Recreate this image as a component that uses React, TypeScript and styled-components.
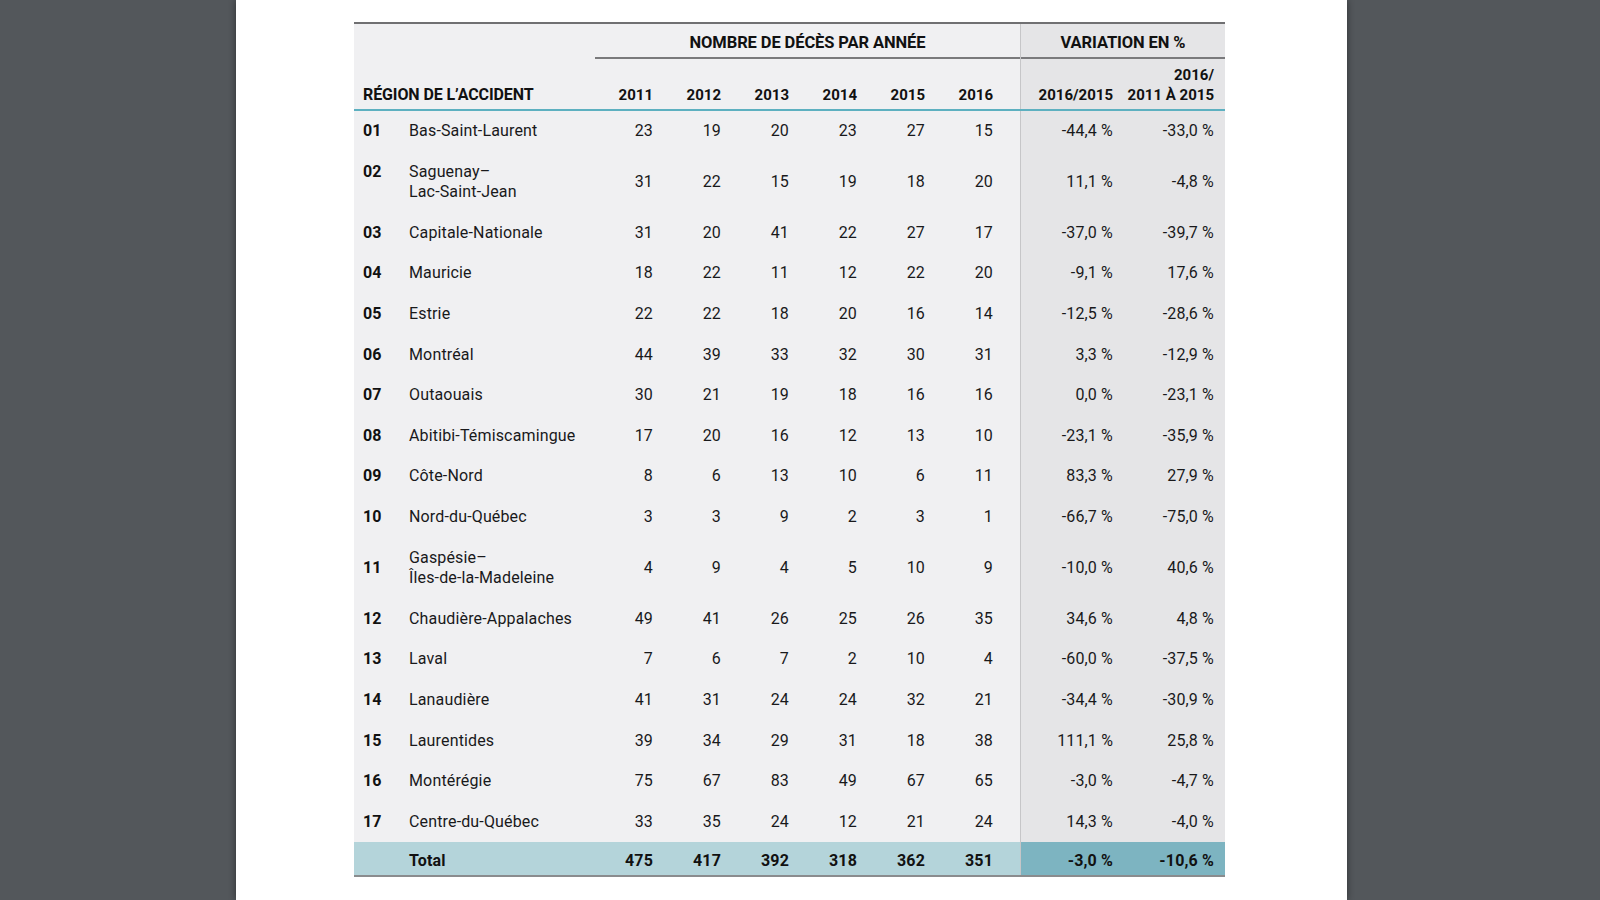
import React from "react";
import styled, { createGlobalStyle } from "styled-components";

const GlobalStyle = createGlobalStyle`
  html, body { margin: 0; padding: 0; }
  body {
    background: #53575b;
    font-family: Roboto, "Liberation Sans", sans-serif;
    color: #19191b;
  }
`;

const Stage = styled.div`
  display: flex;
  padding-left: 236px;
  min-height: 900px;
`;

const Sheet = styled.div`
  width: 1111px;
  min-height: 900px;
  background: #ffffff;
  box-shadow: 0 0 7px rgba(0, 0, 0, 0.45);
  padding: 22px 0 0 118px;
  box-sizing: border-box;
`;

const Table = styled.div`
  width: 871px;
  border-top: 2px solid #707072;
  border-bottom: 2px solid #8a8c8e;
  font-size: 16px;
  letter-spacing: 0.15px;
`;

const Row = styled.div<{ $line?: "teal" | "none" }>`
  display: flex;
  border-bottom: ${(p) => (p.$line === "teal" ? "2px solid #5db0c0" : "none")};
`;

const LeftPart = styled.div<{ $bg?: string; $h?: number }>`
  width: 666px;
  box-sizing: border-box;
  padding-right: 27px;
  display: grid;
  grid-template-columns: 55px 176px repeat(6, 68px);
  background: ${(p) => p.$bg || "#f0f0f2"};
  ${(p) => (p.$h ? `height: ${p.$h}px;` : "")}
`;

const RightPart = styled.div<{ $bg?: string; $h?: number }>`
  width: 205px;
  box-sizing: border-box;
  border-left: 1px solid #c6c6c8;
  padding-right: 11px;
  display: grid;
  grid-template-columns: 92px 101px;
  background: ${(p) => p.$bg || "#e5e5e7"};
  ${(p) => (p.$h ? `height: ${p.$h}px;` : "")}
`;

const GroupLeft = styled.div`
  width: 666px;
  height: 35px;
  box-sizing: border-box;
  padding-left: 241px;
  display: flex;
  background: #f0f0f2;
`;

const GroupRight = styled.div`
  width: 205px;
  height: 35px;
  box-sizing: border-box;
  border-left: 1px solid #c6c6c8;
  display: flex;
  background: #e5e5e7;
`;

const GroupTitle = styled.div`
  flex: 1;
  border-bottom: 2px solid #7a7a7c;
  text-align: center;
  font-weight: 700;
  font-size: 16.5px;
  line-height: 20px;
  padding-top: 9px;
  color: #111;
  letter-spacing: -0.1px;
`;

const HeadCell = styled.div<{ $align?: "left" | "right"; $span?: number; $big?: boolean }>`
  display: flex;
  flex-direction: column;
  justify-content: flex-end;
  align-items: ${(p) => (p.$align === "left" ? "flex-start" : "flex-end")};
  text-align: ${(p) => (p.$align === "left" ? "left" : "right")};
  grid-column: ${(p) => (p.$span ? `span ${p.$span}` : "auto")};
  padding: 0 0 4px ${(p) => (p.$align === "left" ? "9px" : "0")};
  font-weight: 700;
  font-size: ${(p) => (p.$big ? "16px" : "15px")};
  line-height: 20px;
  color: #111;
  letter-spacing: ${(p) => (p.$big ? "-0.1px" : "0")};
  height: 50px;
  box-sizing: border-box;
  white-space: nowrap;
`;

const Code = styled.div<{ $mid?: boolean }>`
  padding: 10px 0 10px 9px;
  font-weight: 700;
  line-height: 20.6px;
  align-self: ${(p) => (p.$mid ? "center" : "start")};
  color: #111;
`;

const Name = styled.div`
  padding: 10px 0;
  line-height: 20.6px;
  align-self: center;
`;

const TotalLabel = styled.div`
  grid-column: 2;
  align-self: center;
  font-weight: 700;
  line-height: 20.6px;
  color: #111;
  padding-top: 5px;
`;

const Num = styled.div<{ $bold?: boolean }>`
  align-self: center;
  text-align: right;
  line-height: 20.6px;
  font-weight: ${(p) => (p.$bold ? 700 : 400)};
  color: ${(p) => (p.$bold ? "#111" : "#19191b")};
  padding-top: ${(p) => (p.$bold ? "5px" : "0")};
  white-space: nowrap;
`;

type Rec = {
  code: string;
  name: string[];
  years: number[];
  v1: string;
  v2: string;
  mid?: boolean;
};

const data: Rec[] = [
  { code: "01", name: ["Bas-Saint-Laurent"], years: [23, 19, 20, 23, 27, 15], v1: "-44,4 %", v2: "-33,0 %" },
  { code: "02", name: ["Saguenay–", "Lac-Saint-Jean"], years: [31, 22, 15, 19, 18, 20], v1: "11,1 %", v2: "-4,8 %" },
  { code: "03", name: ["Capitale-Nationale"], years: [31, 20, 41, 22, 27, 17], v1: "-37,0 %", v2: "-39,7 %" },
  { code: "04", name: ["Mauricie"], years: [18, 22, 11, 12, 22, 20], v1: "-9,1 %", v2: "17,6 %" },
  { code: "05", name: ["Estrie"], years: [22, 22, 18, 20, 16, 14], v1: "-12,5 %", v2: "-28,6 %" },
  { code: "06", name: ["Montréal"], years: [44, 39, 33, 32, 30, 31], v1: "3,3 %", v2: "-12,9 %" },
  { code: "07", name: ["Outaouais"], years: [30, 21, 19, 18, 16, 16], v1: "0,0 %", v2: "-23,1 %" },
  { code: "08", name: ["Abitibi-Témiscamingue"], years: [17, 20, 16, 12, 13, 10], v1: "-23,1 %", v2: "-35,9 %" },
  { code: "09", name: ["Côte-Nord"], years: [8, 6, 13, 10, 6, 11], v1: "83,3 %", v2: "27,9 %" },
  { code: "10", name: ["Nord-du-Québec"], years: [3, 3, 9, 2, 3, 1], v1: "-66,7 %", v2: "-75,0 %" },
  { code: "11", name: ["Gaspésie–", "Îles-de-la-Madeleine"], years: [4, 9, 4, 5, 10, 9], v1: "-10,0 %", v2: "40,6 %", mid: true },
  { code: "12", name: ["Chaudière-Appalaches"], years: [49, 41, 26, 25, 26, 35], v1: "34,6 %", v2: "4,8 %" },
  { code: "13", name: ["Laval"], years: [7, 6, 7, 2, 10, 4], v1: "-60,0 %", v2: "-37,5 %" },
  { code: "14", name: ["Lanaudière"], years: [41, 31, 24, 24, 32, 21], v1: "-34,4 %", v2: "-30,9 %" },
  { code: "15", name: ["Laurentides"], years: [39, 34, 29, 31, 18, 38], v1: "111,1 %", v2: "25,8 %" },
  { code: "16", name: ["Montérégie"], years: [75, 67, 83, 49, 67, 65], v1: "-3,0 %", v2: "-4,7 %" },
  { code: "17", name: ["Centre-du-Québec"], years: [33, 35, 24, 12, 21, 24], v1: "14,3 %", v2: "-4,0 %" },
];

const total = { years: [475, 417, 392, 318, 362, 351], v1: "-3,0 %", v2: "-10,6 %" };
const yearLabels = ["2011", "2012", "2013", "2014", "2015", "2016"];

export default function App() {
  return (
    <>
      <GlobalStyle />
      <Stage>
        <Sheet>
          <Table>
            <Row>
              <GroupLeft>
                <GroupTitle>NOMBRE DE DÉCÈS PAR ANNÉE</GroupTitle>
              </GroupLeft>
              <GroupRight>
                <GroupTitle>VARIATION EN %</GroupTitle>
              </GroupRight>
            </Row>
            <Row $line="teal">
              <LeftPart>
                <HeadCell $align="left" $span={2} $big>
                  RÉGION DE L’ACCIDENT
                </HeadCell>
                {yearLabels.map((y) => (
                  <HeadCell key={y}>{y}</HeadCell>
                ))}
              </LeftPart>
              <RightPart>
                <HeadCell>2016/2015</HeadCell>
                <HeadCell>
                  <span>2016/</span>
                  <span>2011 À 2015</span>
                </HeadCell>
              </RightPart>
            </Row>
            {data.map((r) => (
              <Row key={r.code}>
                <LeftPart>
                  <Code $mid={r.mid}>{r.code}</Code>
                  <Name>
                    {r.name.map((n, i) => (
                      <div key={i}>{n}</div>
                    ))}
                  </Name>
                  {r.years.map((v, i) => (
                    <Num key={i}>{v}</Num>
                  ))}
                </LeftPart>
                <RightPart>
                  <Num>{r.v1}</Num>
                  <Num>{r.v2}</Num>
                </RightPart>
              </Row>
            ))}
            <Row>
              <LeftPart $bg="#b4d4da" $h={33}>
                <TotalLabel>Total</TotalLabel>
                {total.years.map((v, i) => (
                  <Num key={i} $bold>
                    {v}
                  </Num>
                ))}
              </LeftPart>
              <RightPart $bg="#7db4c1" $h={33}>
                <Num $bold>{total.v1}</Num>
                <Num $bold>{total.v2}</Num>
              </RightPart>
            </Row>
          </Table>
        </Sheet>
      </Stage>
    </>
  );
}
